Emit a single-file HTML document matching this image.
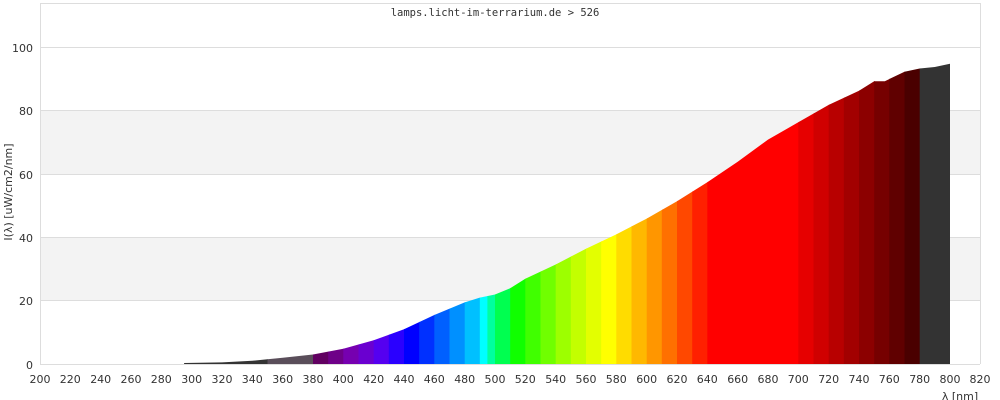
<!DOCTYPE html>
<html><head><meta charset="utf-8"><style>
html,body{margin:0;padding:0;background:#fff;width:1000px;height:400px;overflow:hidden}
</style></head><body>
<svg width="1000" height="400" xmlns="http://www.w3.org/2000/svg" font-family="'DejaVu Sans','Liberation Sans',sans-serif" font-size="11" fill="#333">
<rect x="40" y="111" width="940" height="63.2" fill="#f3f3f3"/>
<rect x="40" y="237.6" width="940" height="63.2" fill="#f3f3f3"/>
<g stroke="#ddd" stroke-width="1">
<line x1="40" y1="3.5" x2="980" y2="3.5"/>
<line x1="40" y1="47.5" x2="980" y2="47.5"/>
<line x1="40" y1="110.5" x2="980" y2="110.5"/>
<line x1="40" y1="174.5" x2="980" y2="174.5"/>
<line x1="40" y1="237.5" x2="980" y2="237.5"/>
<line x1="40" y1="300.5" x2="980" y2="300.5"/>
<line x1="40" y1="364.5" x2="980" y2="364.5"/>
<line x1="40.5" y1="3" x2="40.5" y2="364"/>
<line x1="980.5" y1="3" x2="980.5" y2="364"/>
</g>
<defs><clipPath id="c"><polygon points="184.1,364 184.1,363 222,362.4 252.3,360.8 267.5,359.3 282.7,357.7 313,354.5 343.3,348.8 373.7,340.3 404,329.2 434.3,315 464.7,302.4 479.8,297.6 495,294.5 510.2,288.2 525.3,278.7 555.7,264.5 586,248.7 616.3,234.4 646.7,218.6 677,201.3 707.3,182.3 737.7,161.8 768,139.6 798.3,122.3 828.7,104.9 859,90.7 874.2,81.2 884.8,81.2 904.5,71.7 919.7,68.5 934.8,67 950,63.8 950,364"/></clipPath></defs>
<g clip-path="url(#c)">
<rect x="184" y="0" width="84" height="364" fill="#333"/>
<rect x="267.5" y="0" width="46" height="364" fill="#5a4e5a"/>
<rect x="313" y="0" width="16" height="364" fill="#610061"/>
<rect x="328.2" y="0" width="16" height="364" fill="#6e0088"/>
<rect x="343.3" y="0" width="16" height="364" fill="#7600b0"/>
<rect x="358.5" y="0" width="16" height="364" fill="#6a00d0"/>
<rect x="373.7" y="0" width="16" height="364" fill="#5500f0"/>
<rect x="388.8" y="0" width="16" height="364" fill="#2a00ff"/>
<rect x="404" y="0" width="16" height="364" fill="#0000ff"/>
<rect x="419.2" y="0" width="16" height="364" fill="#0030ff"/>
<rect x="434.3" y="0" width="16" height="364" fill="#0060ff"/>
<rect x="449.5" y="0" width="16" height="364" fill="#0090ff"/>
<rect x="464.7" y="0" width="16" height="364" fill="#00c0ff"/>
<rect x="479.8" y="0" width="8" height="364" fill="#00ffff"/>
<rect x="487.4" y="0" width="8" height="364" fill="#00ffa0"/>
<rect x="495" y="0" width="16" height="364" fill="#00ff50"/>
<rect x="510.2" y="0" width="16" height="364" fill="#10ff00"/>
<rect x="525.3" y="0" width="16" height="364" fill="#40ff00"/>
<rect x="540.5" y="0" width="16" height="364" fill="#70ff00"/>
<rect x="555.7" y="0" width="16" height="364" fill="#9dff00"/>
<rect x="570.8" y="0" width="16" height="364" fill="#c3ff00"/>
<rect x="586" y="0" width="16" height="364" fill="#e3ff00"/>
<rect x="601.2" y="0" width="16" height="364" fill="#ffff00"/>
<rect x="616.3" y="0" width="16" height="364" fill="#ffdc00"/>
<rect x="631.5" y="0" width="16" height="364" fill="#ffb800"/>
<rect x="646.7" y="0" width="16" height="364" fill="#ff9600"/>
<rect x="661.8" y="0" width="16" height="364" fill="#ff7000"/>
<rect x="677" y="0" width="16" height="364" fill="#ff4800"/>
<rect x="692.2" y="0" width="16" height="364" fill="#ff2000"/>
<rect x="707.3" y="0" width="92" height="364" fill="#ff0000"/>
<rect x="798.3" y="0" width="16" height="364" fill="#e60000"/>
<rect x="813.5" y="0" width="16" height="364" fill="#d00000"/>
<rect x="828.7" y="0" width="16" height="364" fill="#b80000"/>
<rect x="843.8" y="0" width="16" height="364" fill="#a20000"/>
<rect x="859" y="0" width="16" height="364" fill="#8c0000"/>
<rect x="874.2" y="0" width="16" height="364" fill="#760000"/>
<rect x="889.3" y="0" width="16" height="364" fill="#600000"/>
<rect x="904.5" y="0" width="16" height="364" fill="#4a0000"/>
<rect x="919.7" y="0" width="31" height="364" fill="#333"/>
</g>
<g text-anchor="end">
<text x="33" y="52">100</text><text x="33" y="115">80</text><text x="33" y="179">60</text>
<text x="33" y="242">40</text><text x="33" y="305">20</text><text x="33" y="369">0</text>
</g>
<g text-anchor="middle">
<text x="40" y="383">200</text><text x="70.3" y="383">220</text><text x="100.7" y="383">240</text><text x="131" y="383">260</text><text x="161.3" y="383">280</text><text x="191.7" y="383">300</text><text x="222" y="383">320</text><text x="252.3" y="383">340</text><text x="282.7" y="383">360</text><text x="313" y="383">380</text><text x="343.3" y="383">400</text><text x="373.7" y="383">420</text><text x="404" y="383">440</text><text x="434.3" y="383">460</text><text x="464.7" y="383">480</text><text x="495" y="383">500</text><text x="525.3" y="383">520</text><text x="555.7" y="383">540</text><text x="586" y="383">560</text><text x="616.3" y="383">580</text><text x="646.7" y="383">600</text><text x="677" y="383">620</text><text x="707.3" y="383">640</text><text x="737.7" y="383">660</text><text x="768" y="383">680</text><text x="798.3" y="383">700</text><text x="828.7" y="383">720</text><text x="859" y="383">740</text><text x="889.3" y="383">760</text><text x="919.7" y="383">780</text><text x="950" y="383">800</text><text x="980" y="383">820</text>
<text x="495" y="16" font-family="'DejaVu Sans Mono','Liberation Mono',monospace" font-size="10.5">lamps.licht-im-terrarium.de &gt; 526</text>
<text x="960" y="400">λ [nm]</text>
<text transform="translate(12,192) rotate(-90)">I(λ)  [uW/cm2/nm]</text>
</g>
</svg>
</body></html>
